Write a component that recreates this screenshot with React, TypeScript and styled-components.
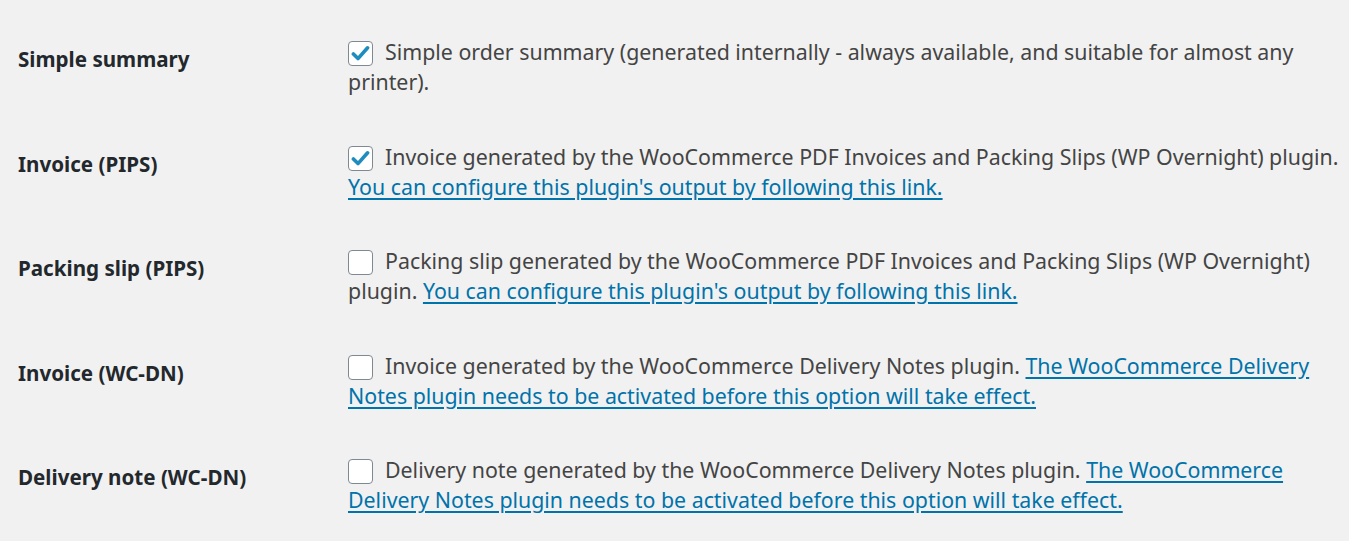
import React from "react";
import styled, { createGlobalStyle } from "styled-components";

const Global = createGlobalStyle`
  html, body { margin: 0; padding: 0; background: #f1f1f1; }
  body {
    font-family: "Noto Sans", "Open Sans", "Liberation Sans", sans-serif;
    color: #444;
    font-size: 21.35px;
  }
`;

const Page = styled.div`
  padding: 15px 0 0 18px;
  width: 1349px;
  box-sizing: border-box;
  overflow: hidden;
`;

const FormTable = styled.table`
  border-collapse: collapse;
  width: 1331px;
  table-layout: fixed;
`;

const Row = styled.tr``;

const Label = styled.th`
  width: 320px;
  box-sizing: border-box;
  padding: 29px 10px 20px 0;
  text-align: left;
  vertical-align: top;
  font-weight: 700;
  color: #23282d;
  line-height: 30px;
  font-size: 20.6px;
`;

const Field = styled.td`
  padding: 22px 4px 22.5px 10px;
  line-height: 30px;
  vertical-align: top;
  font-size: 21.35px;
`;

const Box = styled.span<{ $checked?: boolean }>`
  display: inline-grid;
  place-items: center;
  width: 25px;
  height: 25px;
  box-sizing: border-box;
  border: 1px solid #7e8993;
  border-radius: 4px;
  background: #fff;
  vertical-align: top;
  margin: 4px 12px 0 0;
`;

const Link = styled.a`
  color: #0073aa;
  text-decoration: underline;
  text-underline-offset: 3px;
`;

const Check = () => (
  <svg width="19" height="17" viewBox="0 0 19 17" aria-hidden="true">
    <path d="M2.4 9 L7 13.6 L16.6 2.8" fill="none" stroke="#1e8cbe" strokeWidth="3.6" strokeLinecap="round" strokeLinejoin="round" />
  </svg>
);

type Item = { label: string; checked: boolean; text: React.ReactNode };

const items: Item[] = [
  {
    label: "Simple summary",
    checked: true,
    text: "Simple order summary (generated internally - always available, and suitable for almost any printer).",
  },
  {
    label: "Invoice (PIPS)",
    checked: true,
    text: (
      <>
        Invoice generated by the WooCommerce PDF Invoices and Packing Slips (WP Overnight) plugin.{" "}
        <Link href="#">You can configure this plugin's output by following this link.</Link>
      </>
    ),
  },
  {
    label: "Packing slip (PIPS)",
    checked: false,
    text: (
      <>
        Packing slip generated by the WooCommerce PDF Invoices and Packing Slips (WP Overnight) plugin.{" "}
        <Link href="#">You can configure this plugin's output by following this link.</Link>
      </>
    ),
  },
  {
    label: "Invoice (WC-DN)",
    checked: false,
    text: (
      <>
        Invoice generated by the WooCommerce Delivery Notes plugin.{" "}
        <Link href="#">The WooCommerce Delivery Notes plugin needs to be activated before this option will take effect.</Link>
      </>
    ),
  },
  {
    label: "Delivery note (WC-DN)",
    checked: false,
    text: (
      <>
        Delivery note generated by the WooCommerce Delivery Notes plugin.{" "}
        <Link href="#">The WooCommerce Delivery Notes plugin needs to be activated before this option will take effect.</Link>
      </>
    ),
  },
];

export default function App() {
  return (
    <Page>
      <Global />
      <FormTable>
        <tbody>
          {items.map((it) => (
            <Row key={it.label}>
              <Label scope="row">{it.label}</Label>
              <Field>
                <Box $checked={it.checked}>{it.checked && <Check />}</Box>
                {it.text}
              </Field>
            </Row>
          ))}
        </tbody>
      </FormTable>
    </Page>
  );
}
